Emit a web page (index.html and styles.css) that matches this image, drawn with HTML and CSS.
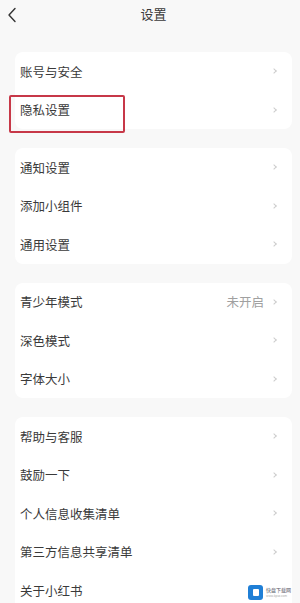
FILE: index.html
```html
<!DOCTYPE html>
<html lang="zh">
<head>
<meta charset="utf-8">
<link rel="stylesheet" href="styles.css">
</head>
<body>
<div class="page">
  <header class="topbar">
    <svg class="back" width="10" height="16" viewBox="0 0 10 16"><path d="M8 1.5 L2 8 L8 14.5" fill="none" stroke="#333" stroke-width="1.4" stroke-linecap="round" stroke-linejoin="round"/></svg>
    <div class="title">设置</div>
  </header>

  <section class="card">
    <div class="row"><span class="label">账号与安全</span><span class="chev"></span></div>
    <div class="row"><span class="label">隐私设置</span><span class="chev"></span><span class="highlight"></span></div>
  </section>

  <section class="card">
    <div class="row"><span class="label">通知设置</span><span class="chev"></span></div>
    <div class="row"><span class="label">添加小组件</span><span class="chev"></span></div>
    <div class="row"><span class="label">通用设置</span><span class="chev"></span></div>
  </section>

  <section class="card">
    <div class="row"><span class="label">青少年模式</span><span class="value">未开启</span><span class="chev"></span></div>
    <div class="row"><span class="label">深色模式</span><span class="chev"></span></div>
    <div class="row"><span class="label">字体大小</span><span class="chev"></span></div>
  </section>

  <section class="card">
    <div class="row"><span class="label">帮助与客服</span><span class="chev"></span></div>
    <div class="row"><span class="label">鼓励一下</span><span class="chev"></span></div>
    <div class="row"><span class="label">个人信息收集清单</span><span class="chev"></span></div>
    <div class="row"><span class="label">第三方信息共享清单</span><span class="chev"></span></div>
    <div class="row"><span class="label">关于小红书</span></div>
  </section>

  <div class="watermark">
    <span class="wm-icon"><span class="wm-inner"></span></span>
    <span class="wm-text">快盘下载网<small>www.kpxz.com</small></span>
  </div>
</div>
</body>
</html>
```

FILE: styles.css
```css
* { box-sizing: border-box; }
html, body {
  margin: 0;
  padding: 0;
  background: #f8f8f8;
}
body {
  font-family: "Noto Sans CJK SC", "Noto Sans", sans-serif;
  color: #333;
}
.page {
  width: 300px;
  height: 603px;
  overflow: hidden;
  position: relative;
  padding: 0 8px 0 15px;
}
.topbar {
  height: 52px;
  position: relative;
  display: flex;
  justify-content: center;
  padding-top: 5px;
}
.back {
  position: absolute;
  left: -8px;
  top: 7px;
}
.title {
  font-size: 13px;
  line-height: 18px;
  color: #3a3a3a;
}
.card {
  background: #fff;
  border-radius: 8px;
  margin-bottom: 19px;
}
.row {
  height: 38.5px;
  display: flex;
  align-items: center;
  padding: 0 16px 0 5px;
  position: relative;
}
.label {
  flex: 1;
  font-size: 12.5px;
  color: #3a3a3a;
}
.value {
  font-size: 12.5px;
  color: #a0a0a0;
  margin-right: 8px;
}
.chev {
  width: 4px;
  height: 4px;
  border-top: 1px solid #ccc;
  border-right: 1px solid #ccc;
  transform: rotate(45deg);
}
.highlight {
  position: absolute;
  left: -6px;
  top: 4px;
  width: 116px;
  height: 38px;
  border: 2px solid #c73848;
  border-radius: 2px;
}
.watermark {
  position: absolute;
  left: 248px;
  top: 585px;
  display: flex;
  align-items: center;
  gap: 3px;
}
.wm-icon {
  width: 15px;
  height: 15px;
  border-radius: 3px;
  background: #1f7fd6;
  display: flex;
  align-items: center;
  justify-content: center;
}
.wm-inner {
  width: 6px;
  height: 7px;
  background: #fff;
  border-radius: 1px;
}
.wm-text {
  font-size: 5px;
  line-height: 6px;
  color: #556;
  display: flex;
  flex-direction: column;
}
.wm-text small {
  font-size: 3px;
  color: #aaa;
}
```
